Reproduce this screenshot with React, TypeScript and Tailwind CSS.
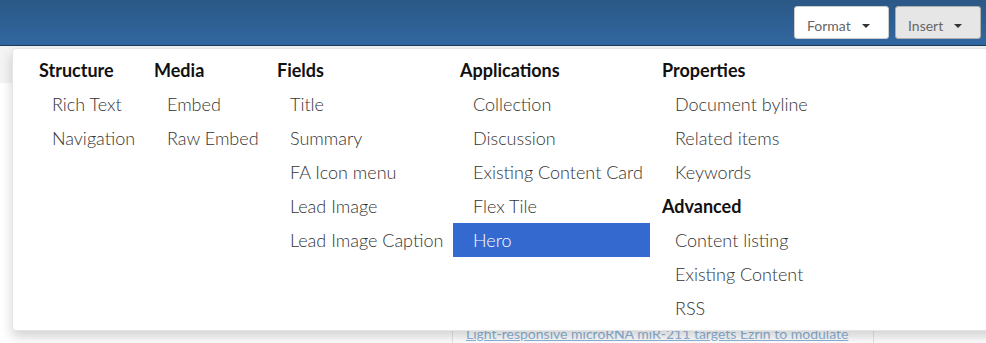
import React from "react";

type Col = { w: string; groups: { title: string; items: string[] }[] };

const cols: Col[] = [
  { w: "w-[110px]", groups: [{ title: "Structure", items: ["Rich Text", "Navigation"] }] },
  { w: "w-[118px]", groups: [{ title: "Media", items: ["Embed", "Raw Embed"] }] },
  { w: "w-[178px]", groups: [{ title: "Fields", items: ["Title", "Summary", "FA Icon menu", "Lead Image", "Lead Image Caption"] }] },
  { w: "w-[197px]", groups: [{ title: "Applications", items: ["Collection", "Discussion", "Existing Content Card", "Flex Tile", "Hero"] }] },
  {
    w: "w-[250px]",
    groups: [
      { title: "Properties", items: ["Document byline", "Related items", "Keywords"] },
      { title: "Advanced", items: ["Content listing", "Existing Content", "RSS"] },
    ],
  },
];

function Caret() {
  return <span className="inline-block ml-[11px] w-0 h-0 border-l-[4px] border-r-[4px] border-t-[4px] border-l-transparent border-r-transparent border-t-[#333]" />;
}

export default function App() {
  return (
    <div className="relative w-[986px] h-[343px] overflow-hidden bg-white" style={{ fontFamily: "Lato, 'Open Sans', sans-serif" }}>
      {/* header */}
      <div className="h-[46px] bg-gradient-to-b from-[#2b5886] to-[#3167a1] border-b border-[#1d3c5c] flex items-start justify-end pt-[6px] pr-[5px] gap-[6px]">
        <button className="h-[33px] w-[95px] bg-white border border-[#cccccc] rounded-[3px] text-[14px] text-[#666] flex items-center pl-[12px] pt-[6px]">
          Format<Caret />
        </button>
        <button className="h-[33px] w-[86px] bg-[#e6e6e6] border border-[#adadad] rounded-[3px] text-[14px] text-[#666] flex items-center pl-[12px] pt-[6px]">
          Insert<Caret />
        </button>
      </div>
      {/* background content */}
      <div className="h-[37px] bg-[#f3f3f3]" />
      <div className="relative h-[260px]">
        <div className="absolute left-[452px] top-0 h-full border-l border-[#e5e5e5]" />
        <div className="absolute left-[873px] top-0 h-full border-l border-[#e5e5e5]" />
        <div className="absolute left-[466px] top-[242px] text-[14px] leading-[17px] text-[#8db4da] underline whitespace-nowrap">
          Light-responsive microRNA miR-211 targets Ezrin to modulate
        </div>
      </div>
      {/* dropdown panel */}
      <div className="absolute left-[12px] top-[48px] w-[990px] bg-white rounded-[4px] border border-black/10 shadow-[0_6px_12px_rgba(0,0,0,0.175)] pt-[4px] pb-[5px] pl-[19px] flex gap-[5px]">
        {cols.map((c, i) => (
          <div key={i} className={`${c.w} flex flex-col`}>
            {c.groups.map((g) => (
              <div key={g.title} className="flex flex-col">
                <div className="h-[34px] flex items-center pl-[7px] text-[18px] font-bold text-[#111]">{g.title}</div>
                {g.items.map((it) =>
                  it === "Hero" ? (
                    <div key={it} className="h-[34px] flex items-center pl-[20px] text-[18px] text-white bg-[#3469d0] font-light">
                      {it}
                    </div>
                  ) : (
                    <div key={it} className="h-[34px] flex items-center pl-[20px] text-[18px] text-[#333] font-light whitespace-nowrap">
                      {it}
                    </div>
                  )
                )}
              </div>
            ))}
          </div>
        ))}
      </div>
    </div>
  );
}
